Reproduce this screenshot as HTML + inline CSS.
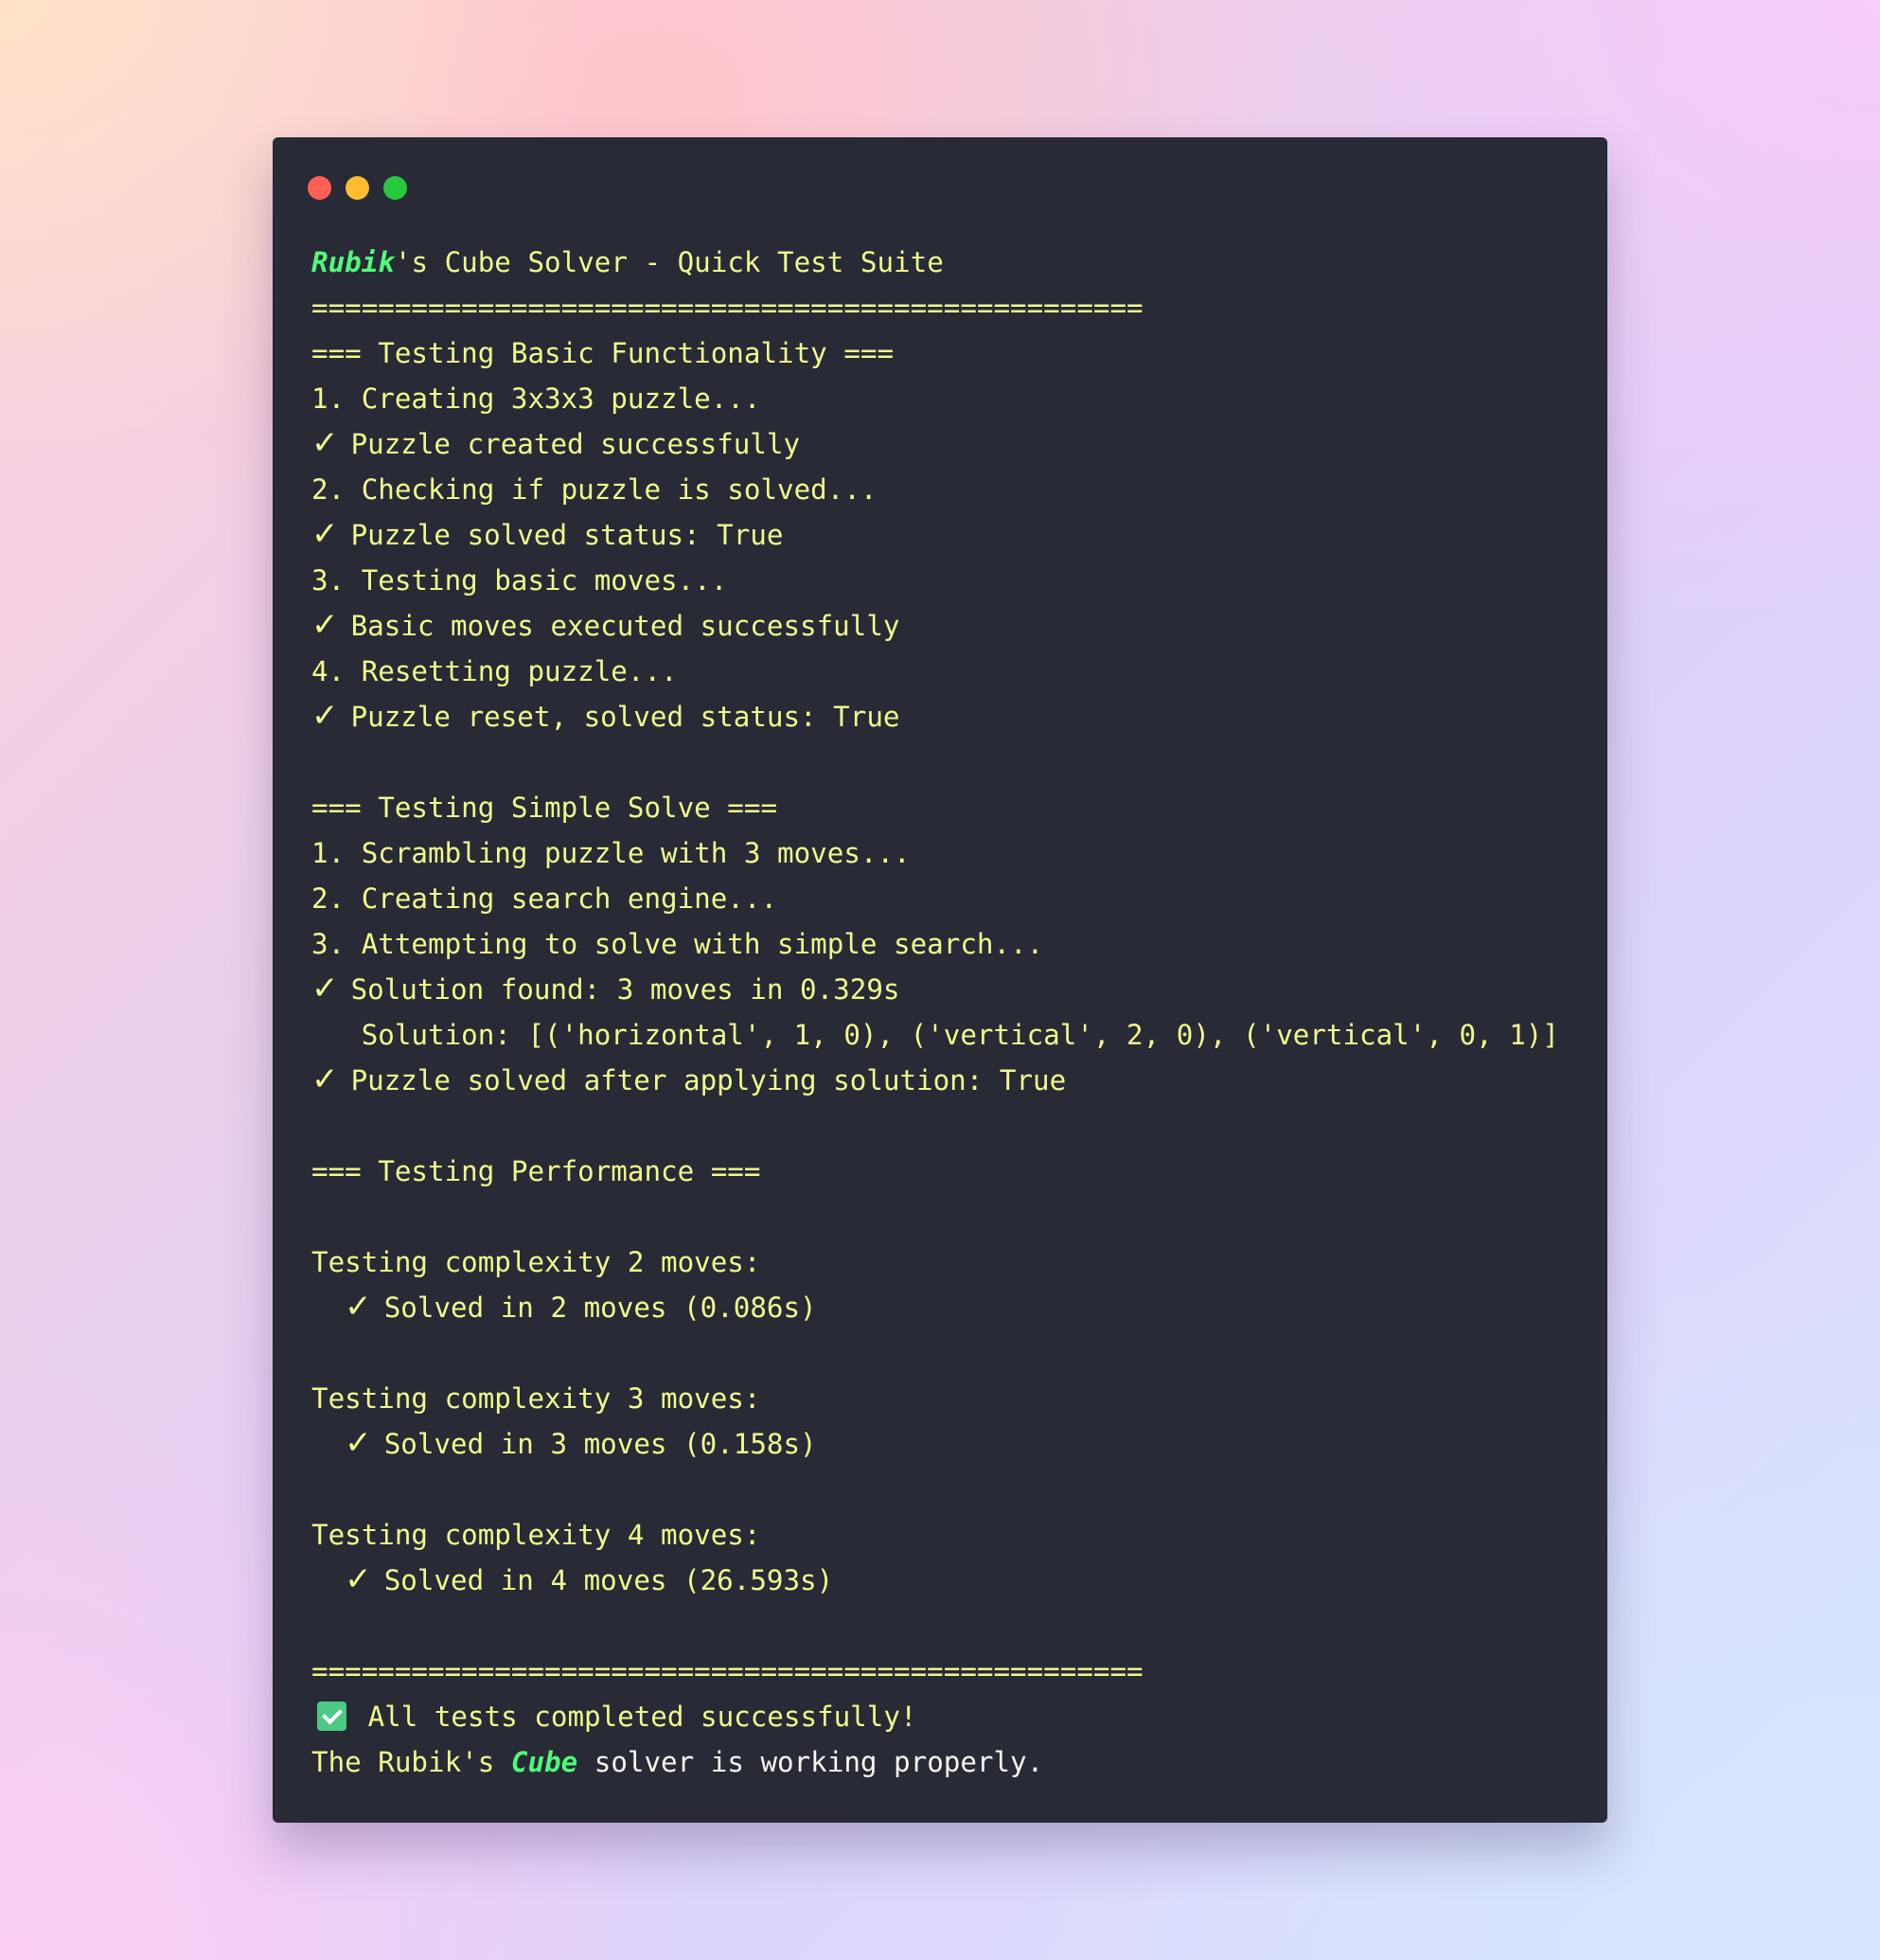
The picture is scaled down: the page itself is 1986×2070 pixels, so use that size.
<!DOCTYPE html>
<html><head><meta charset="utf-8"><style>
html,body{margin:0;padding:0}
body{width:1986px;height:2070px;position:relative;overflow:hidden;
background:
radial-gradient(ellipse 900px 700px at 0% 0%, #ffe2c8 0%, rgba(255,226,200,0) 70%),
radial-gradient(ellipse 1000px 800px at 35% 5%, #ffc6cc 0%, rgba(255,198,204,0) 70%),
radial-gradient(ellipse 1100px 900px at 100% 0%, #f6ccf8 0%, rgba(246,204,248,0) 75%),
radial-gradient(ellipse 1000px 900px at 0% 100%, #fccdf2 0%, rgba(252,205,242,0) 75%),
radial-gradient(ellipse 1200px 1000px at 100% 100%, #d6e6fe 0%, rgba(214,230,254,0) 75%),
linear-gradient(135deg,#fdd0d8 0%,#e0d0fa 55%,#d6e2fc 100%);}
.win{position:absolute;left:288px;top:145px;width:1410px;height:1780px;background:#282a36;border-radius:6px;box-shadow:0 28px 50px rgba(60,40,90,0.28)}
.dot{position:absolute;top:186px;width:25px;height:25px;border-radius:50%}
pre{position:absolute;left:329px;top:253px;margin:0;font-family:"DejaVu Sans Mono","Liberation Mono",monospace;font-size:29.2px;line-height:48px;color:#f1fa8c;white-space:pre}
.g{color:#50fa7b;font-style:italic;font-weight:bold}
.w{color:#f8f8f2}
.v{display:inline-block;width:24px;font-size:34px;line-height:30px;font-family:"DejaVu Sans",sans-serif}
.ck{display:inline-block;width:31px;height:31px;background:#4cc985;border-radius:4px;vertical-align:-5px;position:relative;margin-left:6px;margin-right:5px}
.ck:after{content:"";position:absolute;left:10px;top:4px;width:8px;height:15px;border:solid #fff;border-width:0 4px 4px 0;transform:rotate(45deg)}
</style></head><body>
<div class="win"></div>
<div class="dot" style="left:325px;background:#ff5f57"></div>
<div class="dot" style="left:365px;background:#febc2e"></div>
<div class="dot" style="left:405px;background:#28c840"></div>
<pre><span class="g">Rubik</span>'s Cube Solver - Quick Test Suite
==================================================
=== Testing Basic Functionality ===
1. Creating 3x3x3 puzzle...
<span class="v">✓</span> Puzzle created successfully
2. Checking if puzzle is solved...
<span class="v">✓</span> Puzzle solved status: True
3. Testing basic moves...
<span class="v">✓</span> Basic moves executed successfully
4. Resetting puzzle...
<span class="v">✓</span> Puzzle reset, solved status: True

=== Testing Simple Solve ===
1. Scrambling puzzle with 3 moves...
2. Creating search engine...
3. Attempting to solve with simple search...
<span class="v">✓</span> Solution found: 3 moves in 0.329s
   Solution: [('horizontal', 1, 0), ('vertical', 2, 0), ('vertical', 0, 1)]
<span class="v">✓</span> Puzzle solved after applying solution: True

=== Testing Performance ===

Testing complexity 2 moves:
  <span class="v">✓</span> Solved in 2 moves (0.086s)

Testing complexity 3 moves:
  <span class="v">✓</span> Solved in 3 moves (0.158s)

Testing complexity 4 moves:
  <span class="v">✓</span> Solved in 4 moves (26.593s)

==================================================
<span class="ck"></span> All tests completed successfully!
The Rubik's <span class="g">Cube</span><span class="w"> solver is working properly.</span></pre>
</body></html>
